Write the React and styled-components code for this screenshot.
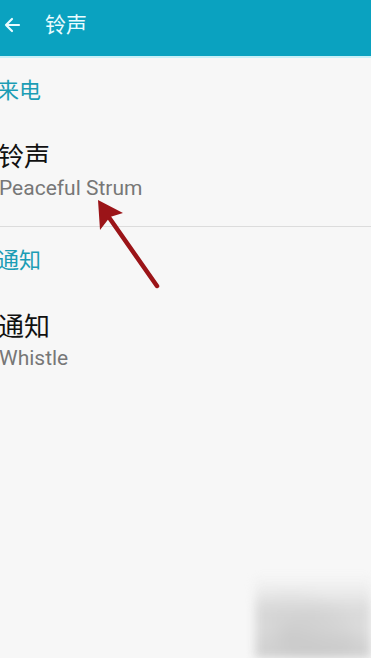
import React from "react";
import styled, {createGlobalStyle} from "styled-components";

const Global = createGlobalStyle`
  html, body {
    margin: 0;
    padding: 0;
    background: #f7f7f7;
  }
  body {
    font-family: Roboto, "Noto Sans CJK SC", sans-serif;
  }
`;

const Screen = styled.div`
  position: relative;
  width: 371px;
  height: 658px;
  overflow: hidden;
  background: #f7f7f7;
`;

const Toolbar = styled.header`
  height: 56px;
  background: #0aa2c0;
  border-bottom: 2px solid #c9f1f8;
  display: flex;
  align-items: center;
  color: #eafcff;
`;

const BackButton = styled.div`
  width: 26px;
  padding-left: 2px;
  display: flex;
  align-items: center;
  margin-top: -6px;
`;

const ToolbarTitle = styled.div`
  margin-left: 17px;
  margin-top: -10px;
  font-size: 21px;
  font-family: "Noto Sans CJK SC", sans-serif;
`;

const SectionTitle = styled.div`
  color: #1c9db5;
  font-size: 22px;
  font-family: "Noto Sans CJK SC", sans-serif;
  height: 36px;
  line-height: 36px;
  margin-left: -3px;
  padding-top: ${p => p.top || 12}px;
`;

const Item = styled.div`
  padding-top: ${p => p.top || 31}px;
  padding-bottom: 24px;
`;

const ItemTitle = styled.div`
  font-family: "Noto Sans CJK SC", sans-serif;
  font-size: 26px;
  line-height: 36px;
  color: #111;
  margin-left: -2px;
`;

const ItemSub = styled.div`
  font-family: Roboto, sans-serif;
  font-size: 21px;
  line-height: 28px;
  margin-top: 1px;
  color: #777;
  margin-left: -1px;
`;

const Divider = styled.div`
  height: 1px;
  background: #dcdcdc;
`;

const Pointer = styled.svg`
  position: absolute;
  left: 88px;
  top: 192px;
`;

const Watermark = styled.div`
  position: absolute;
  right: 0;
  bottom: 0;
  width: 116px;
  height: 80px;
  background:
    radial-gradient(ellipse at 30% 70%, rgba(160,160,160,0.35), transparent 60%),
    radial-gradient(ellipse at 80% 80%, rgba(170,170,170,0.3), transparent 55%),
    linear-gradient(180deg, rgba(235,235,235,0.2) 0%, #e0e0e0 40%, #e8e8e8 65%, #d8d8d8 100%);
  filter: blur(5px);
`;

export default function App() {
    return (
        <>
            <Global/>
            <Screen>
                <Toolbar>
                    <BackButton>
                        <svg width="20" height="20" viewBox="0 0 20 20" fill="none" stroke="#eafcff" strokeWidth="2.2" strokeLinecap="round" strokeLinejoin="round">
                            <path d="M17 10H4M10 4l-6 6 6 6"/>
                        </svg>
                    </BackButton>
                    <ToolbarTitle>铃声</ToolbarTitle>
                </Toolbar>
                <SectionTitle>来电</SectionTitle>
                <Item>
                    <ItemTitle>铃声</ItemTitle>
                    <ItemSub>Peaceful Strum</ItemSub>
                </Item>
                <Divider/>
                <SectionTitle top={13}>通知</SectionTitle>
                <Item>
                    <ItemTitle>通知</ItemTitle>
                    <ItemSub>Whistle</ItemSub>
                </Item>
                <Pointer width="80" height="100" viewBox="0 0 80 100">
                    <path d="M69 94 L20 24" stroke="#9b1418" strokeWidth="4.5" strokeLinecap="round"/>
                    <path d="M10 8 L35 21 L22 25 L12 38 Z" fill="#9b1418"/>
                </Pointer>
                <Watermark/>
            </Screen>
        </>
    );
}
